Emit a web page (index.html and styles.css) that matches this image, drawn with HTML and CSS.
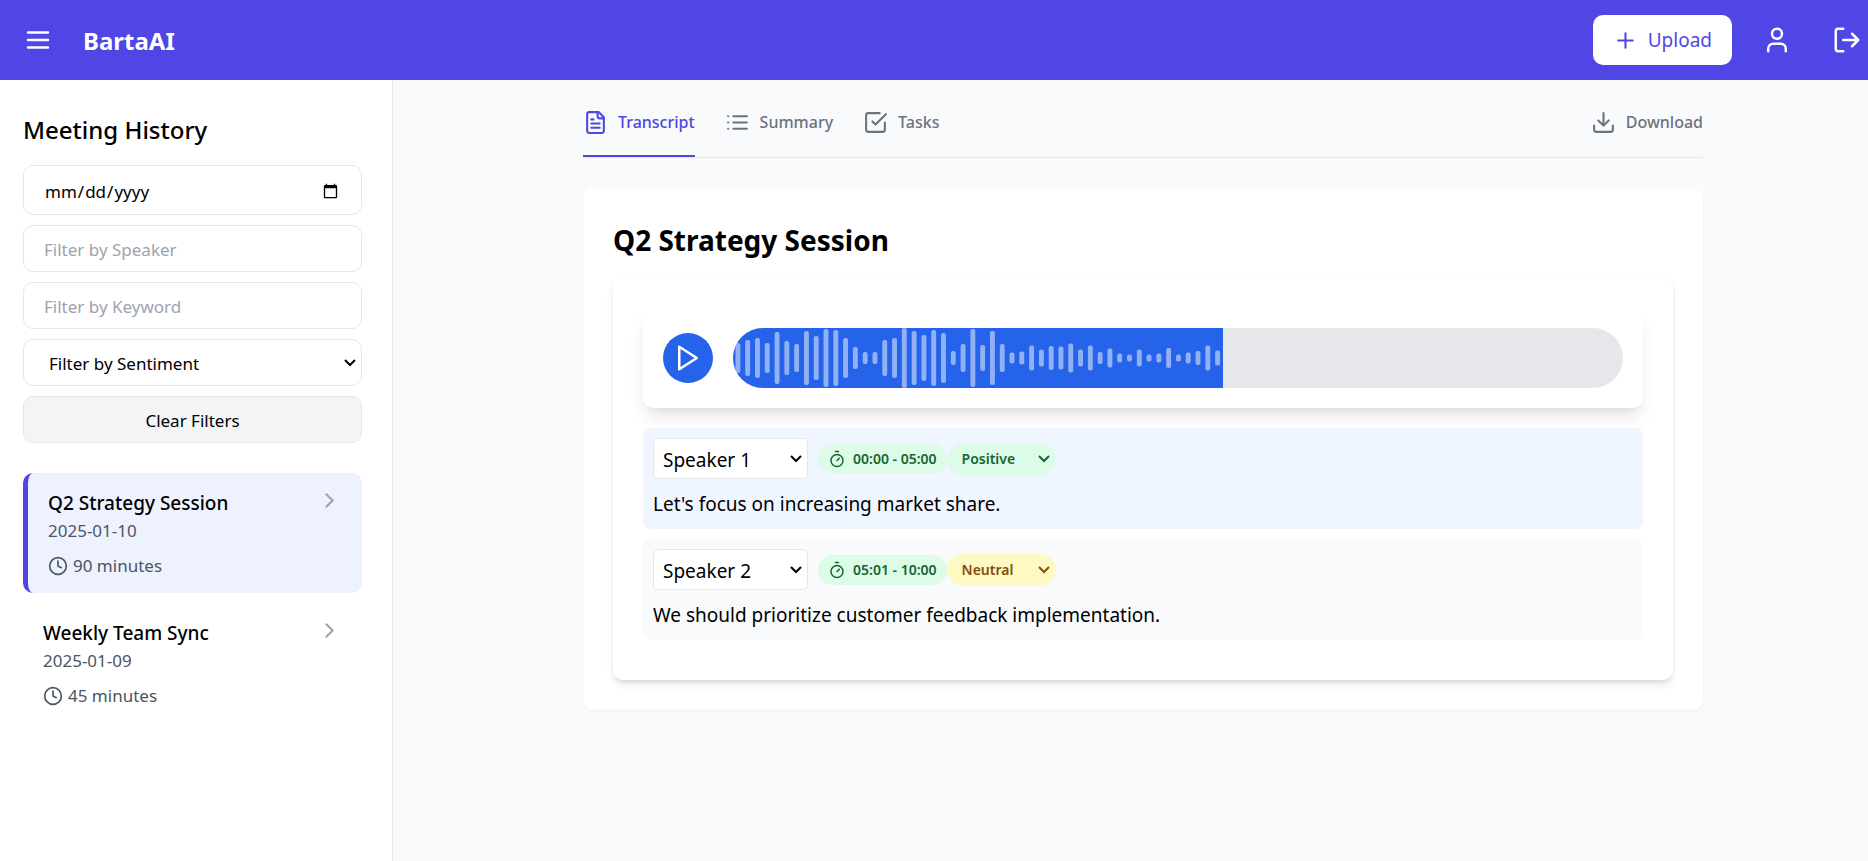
FILE: index.html
```html
<!DOCTYPE html>
<html lang="en">
<head>
<meta charset="utf-8">
<meta name="viewport" content="width=device-width, initial-scale=1">
<title>BartaAI</title>
<link rel="stylesheet" href="styles.css">
</head>
<body>
<header class="topbar">
  <button class="icon-btn" type="button" aria-label="Toggle menu">
    <svg class="icon icon-lg" viewBox="0 0 24 24"><path d="M4 6h16M4 12h16M4 18h16"/></svg>
  </button>
  <h1 class="brand">BartaAI</h1>
  <div class="topbar-actions">
    <button class="upload" type="button">
      <svg class="icon" viewBox="0 0 24 24"><path d="M5 12h14M12 5v14"/></svg>
      Upload
    </button>
    <button class="icon-btn" type="button" aria-label="Profile">
      <svg class="icon icon-lg" viewBox="0 0 24 24"><path d="M19 21v-2a4 4 0 0 0-4-4H9a4 4 0 0 0-4 4v2"/><circle cx="12" cy="7" r="4"/></svg>
    </button>
    <button class="icon-btn" type="button" aria-label="Log out">
      <svg class="icon icon-lg" viewBox="0 0 24 24"><path d="M9 21H5a2 2 0 0 1-2-2V5a2 2 0 0 1 2-2h4M16 17l5-5-5-5M21 12H9"/></svg>
    </button>
  </div>
</header>

<div class="layout">
  <aside class="sidebar">
    <h2 class="sidebar-title">Meeting History</h2>
    <form class="filters">
      <input class="field field-date" type="date" aria-label="Filter by date">
      <input class="field" type="text" placeholder="Filter by Speaker" aria-label="Filter by Speaker">
      <input class="field" type="text" placeholder="Filter by Keyword" aria-label="Filter by Keyword">
      <div class="select">
        <select class="field field-select" aria-label="Filter by Sentiment">
          <option>Filter by Sentiment</option>
          <option>Positive</option>
          <option>Neutral</option>
          <option>Negative</option>
        </select>
        <svg class="select-arrow" viewBox="0 0 12 8"><path d="M1 1l5 5 5-5"/></svg>
      </div>
      <button class="field field-clear" type="reset">Clear Filters</button>
    </form>
    <ul class="meetings">
      <li class="meeting meeting-active">
        <div>
          <h3 class="meeting-title">Q2 Strategy Session</h3>
          <p class="meeting-meta">2025-01-10</p>
          <p class="meeting-meta meeting-time">
            <svg class="icon icon-sm" viewBox="0 0 24 24"><circle cx="12" cy="12" r="10"/><path d="M12 6v6l4 2"/></svg>
            90 minutes
          </p>
        </div>
        <svg class="icon chevron" viewBox="0 0 24 24"><path d="M9 18l6-6-6-6"/></svg>
      </li>
      <li class="meeting">
        <div>
          <h3 class="meeting-title">Weekly Team Sync</h3>
          <p class="meeting-meta">2025-01-09</p>
          <p class="meeting-meta meeting-time">
            <svg class="icon icon-sm" viewBox="0 0 24 24"><circle cx="12" cy="12" r="10"/><path d="M12 6v6l4 2"/></svg>
            45 minutes
          </p>
        </div>
        <svg class="icon chevron" viewBox="0 0 24 24"><path d="M9 18l6-6-6-6"/></svg>
      </li>
    </ul>
  </aside>

  <main class="main">
    <div class="content">
      <nav class="tabs">
        <button class="tab tab-active" type="button">
          <svg class="icon" viewBox="0 0 24 24"><path d="M15 2H6a2 2 0 0 0-2 2v16a2 2 0 0 0 2 2h12a2 2 0 0 0 2-2V7z"/><path d="M14 2v4a2 2 0 0 0 2 2h4M10 9H8M16 13H8M16 17H8"/></svg>
          Transcript
        </button>
        <button class="tab" type="button">
          <svg class="icon" viewBox="0 0 24 24"><path d="M8 6h13M8 12h13M8 18h13M3 6h.01M3 12h.01M3 18h.01"/></svg>
          Summary
        </button>
        <button class="tab" type="button">
          <svg class="icon" viewBox="0 0 24 24"><path d="M9 11l3 3L22 4"/><path d="M21 12v7a2 2 0 0 1-2 2H5a2 2 0 0 1-2-2V5a2 2 0 0 1 2-2h11"/></svg>
          Tasks
        </button>
        <button class="tab tab-download" type="button">
          <svg class="icon" viewBox="0 0 24 24"><path d="M21 15v4a2 2 0 0 1-2 2H5a2 2 0 0 1-2-2v-4M7 10l5 5 5-5M12 15V3"/></svg>
          Download
        </button>
      </nav>

      <section class="card">
        <h2 class="card-title">Q2 Strategy Session</h2>
        <div class="transcript">
          <div class="player">
            <button class="play" type="button" aria-label="Play">
              <svg class="icon icon-lg" viewBox="0 0 24 24"><path d="M5 3l14 9-14 9z"/></svg>
            </button>
            <div class="track">
              <svg class="wave" viewBox="0 0 490 60" preserveAspectRatio="none" aria-hidden="true"></svg>
            </div>
          </div>

          <article class="segment segment-active">
            <div class="segment-head">
              <div class="select">
                <select class="speaker" aria-label="Speaker"><option>Speaker 1</option><option>Speaker 2</option></select>
                <svg class="select-arrow" viewBox="0 0 12 8"><path d="M1 1l5 5 5-5"/></svg>
              </div>
              <div class="pills">
                <span class="pill">
                  <svg class="icon icon-xs" viewBox="0 0 24 24"><path d="M10 2h4M12 14l3-3"/><circle cx="12" cy="14" r="8"/></svg>
                  00:00 - 05:00
                </span>
                <div class="select positive">
                  <select class="sentiment" aria-label="Sentiment"><option>Positive</option><option>Neutral</option><option>Negative</option></select>
                  <svg class="select-arrow" viewBox="0 0 12 8"><path d="M1 1l5 5 5-5"/></svg>
                </div>
              </div>
            </div>
            <p class="segment-text">Let's focus on increasing market share.</p>
          </article>

          <article class="segment">
            <div class="segment-head">
              <div class="select">
                <select class="speaker" aria-label="Speaker"><option>Speaker 2</option><option>Speaker 1</option></select>
                <svg class="select-arrow" viewBox="0 0 12 8"><path d="M1 1l5 5 5-5"/></svg>
              </div>
              <div class="pills">
                <span class="pill">
                  <svg class="icon icon-xs" viewBox="0 0 24 24"><path d="M10 2h4M12 14l3-3"/><circle cx="12" cy="14" r="8"/></svg>
                  05:01 - 10:00
                </span>
                <div class="select neutral">
                  <select class="sentiment" aria-label="Sentiment"><option>Neutral</option><option>Positive</option><option>Negative</option></select>
                  <svg class="select-arrow" viewBox="0 0 12 8"><path d="M1 1l5 5 5-5"/></svg>
                </div>
              </div>
            </div>
            <p class="segment-text">We should prioritize customer feedback implementation.</p>
          </article>
        </div>
      </section>
    </div>
  </main>
</div>
<script src="wave.js"></script>
</body>
</html>
```

FILE: styles.css
```css
* { box-sizing: border-box; }

body {
  margin: 0;
  min-height: 100vh;
  display: flex;
  flex-direction: column;
  background: #f9fafb;
  color: #000;
  font-family: "Segoe UI", "Noto Sans", sans-serif;
  font-size: 19px;
  line-height: 30px;
}

h1, h2, h3, p, ul { margin: 0; padding: 0; }
ul { list-style: none; }

button, input, select {
  font: inherit;
  color: inherit;
  margin: 0;
}

button {
  border: 0;
  background: none;
  padding: 0;
  cursor: pointer;
}

.icon {
  display: block;
  flex: none;
  width: 25px;
  height: 25px;
  fill: none;
  stroke: currentColor;
  stroke-width: 2;
  stroke-linecap: round;
  stroke-linejoin: round;
}
.icon-lg { width: 30px; height: 30px; }
.icon-sm { width: 20px; height: 20px; }
.icon-xs { width: 18px; height: 18px; }

/* Drop-down with its own arrow stacked in the same grid cell */
.select {
  display: grid;
  align-items: center;
}
.select > * { grid-area: 1 / 1; }
.select select { appearance: none; }
.select-arrow {
  justify-self: end;
  width: 12px;
  height: 8px;
  margin-right: 6px;
  fill: none;
  stroke: currentColor;
  stroke-width: 2;
  pointer-events: none;
}

/* Top bar */
.topbar {
  display: flex;
  align-items: center;
  height: 80px;
  padding: 0 6px 0 23px;
  background: #4f46e5;
  color: #fff;
}
.brand {
  margin-left: 30px;
  padding-top: 2px;
  font-size: 24px;
  font-weight: 700;
}
.topbar-actions {
  display: flex;
  align-items: center;
  gap: 40px;
  margin-left: auto;
}
.upload {
  display: flex;
  align-items: center;
  gap: 10px;
  height: 50px;
  margin-right: -10px;
  padding: 0 20px;
  border-radius: 10px;
  background: #fff;
  color: #4f46e5;
}

/* Sidebar */
.layout { display: flex; flex: 1; }
.sidebar {
  flex: none;
  width: 393px;
  padding: 32px 30px 30px 23px;
  border-right: 1px solid #e5e7eb;
  background: #fff;
}
.sidebar-title {
  margin-bottom: 18px;
  font-size: 24px;
  line-height: 35px;
  font-weight: 500;
}
.filters {
  display: grid;
  gap: 10px;
  margin-bottom: 30px;
}
.field {
  width: 100%;
  height: 47px;
  padding: 2px 20px 0;
  border: 1px solid #e5e7eb;
  border-radius: 10px;
  background: #fff;
  font-size: 17px;
  line-height: 25px;
}
.field::placeholder { color: #9ca3af; }
.field-date { height: 50px; }
.field-select { padding-left: 25px; }
.field-clear { background: #f3f4f6; }

.meetings { display: grid; gap: 10px; }
.meeting {
  display: flex;
  justify-content: space-between;
  padding: 15px 20px;
  border-radius: 10px;
}
.meeting-active {
  border-left: 5px solid #4f46e5;
  background: #eef2ff;
}
.meeting-title {
  padding-top: 1px;
  font-size: 19px;
  line-height: 29px;
  font-weight: 500;
}
.meeting-meta {
  color: #4b5563;
  font-size: 17px;
  line-height: 25px;
}
.meeting-time {
  display: flex;
  align-items: center;
  gap: 5px;
  margin-top: 10px;
}
.chevron { color: #9ca3af; }

/* Main column */
.main {
  flex: 1;
  min-width: 0;
  padding: 0 0 30px 25px;
}
.content {
  max-width: 1120px;
  margin: 0 auto;
}
.tabs {
  display: flex;
  gap: 30px;
  margin-bottom: 30px;
  padding-top: 10px;
  border-bottom: 1px solid #e5e7eb;
}
.tab {
  display: flex;
  align-items: center;
  gap: 10px;
  padding: 20px 0;
  border-bottom: 2px solid transparent;
  color: #6b7280;
  font-size: 16px;
  line-height: 25px;
  font-weight: 500;
}
.tab-active {
  border-color: #4f46e5;
  color: #4f46e5;
}
.tab-download { margin-left: auto; }

.card {
  padding: 30px;
  border-radius: 10px;
  background: #fff;
  box-shadow: 0 1px 2px rgba(0, 0, 0, 0.05);
}
.card-title {
  margin-bottom: 18px;
  padding-top: 2px;
  font-size: 28px;
  line-height: 40px;
  font-weight: 700;
}
.transcript {
  display: grid;
  gap: 10px;
  padding: 30px 30px 40px;
  border-radius: 10px;
  background: #fff;
  box-shadow: 0 5px 8px -1px rgba(0, 0, 0, 0.1), 0 3px 5px -2px rgba(0, 0, 0, 0.1);
}

/* Audio player */
.player {
  display: flex;
  align-items: center;
  gap: 20px;
  margin-bottom: 10px;
  padding: 20px;
  border-radius: 10px;
  background: #fff;
  box-shadow: 0 12px 19px -4px rgba(0, 0, 0, 0.1), 0 5px 8px -5px rgba(0, 0, 0, 0.1);
}
.play {
  display: grid;
  place-items: center;
  flex: none;
  width: 50px;
  height: 50px;
  border-radius: 50%;
  background: #2563eb;
  color: #fff;
}
.track {
  flex: 1;
  height: 60px;
  border-radius: 30px;
  overflow: hidden;
  background: #e5e7eb;
}
.wave {
  display: block;
  width: 55%;
  height: 100%;
  background: #2563eb;
  fill: rgba(255, 255, 255, 0.5);
}

/* Transcript segments */
.segment {
  display: grid;
  gap: 10px;
  padding: 10px;
  border-radius: 8px;
  background: #f9fafb;
}
.segment-active { background: #eff6ff; }
.segment-head {
  display: flex;
  align-items: center;
  gap: 10px;
}
.segment-text {
  padding-top: 1px;
  line-height: 29px;
}
.speaker {
  width: 155px;
  height: 41px;
  padding: 2px 9px 0;
  border: 1px solid #e5e7eb;
  border-radius: 5px;
  background: #fff;
}
.pills { display: flex; align-items: center; }
.pill {
  display: flex;
  align-items: center;
  gap: 7px;
  height: 30px;
  padding: 0 10px;
  border-radius: 15px;
  background: #dcfce7;
  color: #166534;
  font-size: 14px;
  font-weight: 600;
}
.sentiment {
  width: 109px;
  height: 32px;
  padding: 0 15px;
  border: 0;
  border-radius: 16px;
  background: none;
  font-size: 14px;
  font-weight: 600;
}
.positive, .neutral { border-radius: 16px; }
.positive { background: #dcfce7; color: #166534; }
.neutral { background: #fef9c3; color: #854d0e; }
```

FILE: wave.js
```js
const levels = [
  30, 36, 40, 30, 52, 34, 28, 54, 44, 58, 56, 40, 22, 12, 12, 36, 40, 60, 54, 46,
  56, 50, 14, 28, 58, 26, 54, 28, 11, 13, 25, 17, 24, 23, 29, 17, 25, 12, 19, 9,
  7, 17, 7, 9, 20, 7, 11, 14, 25, 15
];
const wave = document.querySelector('.wave');
const step = 490 / levels.length;
levels.forEach((level, i) => {
  const bar = document.createElementNS('http://www.w3.org/2000/svg', 'rect');
  bar.setAttribute('x', i * step + step / 4);
  bar.setAttribute('y', (60 - level) / 2);
  bar.setAttribute('width', step / 2);
  bar.setAttribute('height', level);
  bar.setAttribute('rx', 2);
  wave.append(bar);
});
```
